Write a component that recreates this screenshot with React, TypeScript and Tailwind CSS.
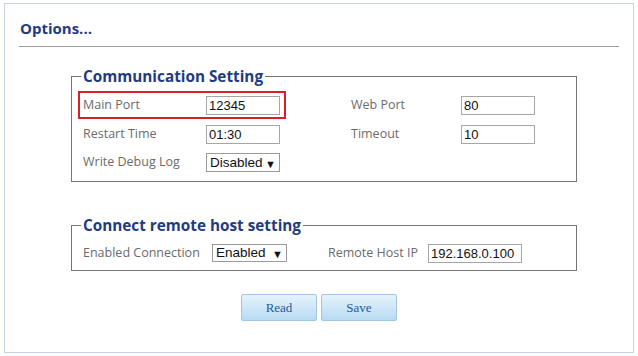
import { useState } from "react";

const labelCls = "text-[12.5px] text-[#6b6b6b] [font-family:'Open_Sans',sans-serif]";
const inputCls =
  "block h-[19px] border border-[#a6a6a6] bg-white px-[2px] py-0 text-[13px] leading-[17px] text-[#111] [font-family:'Liberation_Sans',Arial,sans-serif] outline-none";

function Select({ value, options, className }: { value: string; options: string[]; className: string }) {
  const [v, setV] = useState(value);
  return (
    <div className={"relative " + className}>
      <select
        value={v}
        onChange={(e) => setV(e.target.value)}
        className="block h-full w-full appearance-none border border-[#9a9a9a] bg-white py-0 pl-[3px] text-[13.5px] leading-[16px] text-[#111] [font-family:'Liberation_Sans',Arial,sans-serif] outline-none"
      >
        {options.map((o) => (
          <option key={o}>{o}</option>
        ))}
      </select>
      <span className="pointer-events-none absolute right-[4px] top-1/2 -translate-y-1/2 text-[11px] leading-[11px] text-[#111]">▼</span>
    </div>
  );
}

function Legend({ children }: { children: string }) {
  return (
    <legend className="ml-[9px] px-[2px] text-[15.3px] leading-[20px] font-bold text-[#1f3b82] [font-family:'Open_Sans',sans-serif]">
      {children}
    </legend>
  );
}

export default function App() {
  return (
    <div className="h-[356px] w-[638px] bg-white pl-[4px] pt-[3px]">
      <div className="h-[350px] w-[630px] border border-[#c3d5e6] bg-white">
        <h1 className="pl-[15px] pt-[14px] text-[15px] leading-[20px] font-bold text-[#1f3b82] [font-family:'Open_Sans',sans-serif]">
          Options...
        </h1>
        <div className="mx-[14px] mt-[8px] h-px bg-[#9d9d9d]" />

        <fieldset className="ml-[66px] mt-[19px] w-[506px] border border-[#747474] pb-[4px] pt-[5px]">
          <Legend>Communication Setting</Legend>
          <div className="flex h-[28px] items-center">
            <div className="ml-[6px] flex h-[28px] items-center border-2 border-[#d9202a] pl-[3px] pr-[4px]">
              <span className={labelCls + " w-[123px]"}>Main Port</span>
              <input className={inputCls + " w-[74px]"} defaultValue="12345" />
            </div>
            <span className={labelCls + " ml-[65px] w-[110px]"}>Web Port</span>
            <input className={inputCls + " w-[74px]"} defaultValue="80" />
          </div>
          <div className="flex h-[29px] items-center pl-[11px] pt-[1px]">
            <span className={labelCls + " w-[123px]"}>Restart Time</span>
            <input className={inputCls + " w-[74px]"} defaultValue="01:30" />
            <span className={labelCls + " ml-[71px] w-[110px]"}>Timeout</span>
            <input className={inputCls + " w-[74px]"} defaultValue="10" />
          </div>
          <div className="flex h-[29px] items-center pl-[11px]">
            <span className={labelCls + " w-[123px]"}>Write Debug Log</span>
            <Select value="Disabled" options={["Disabled", "Enabled"]} className="h-[19px] w-[74px]" />
          </div>
        </fieldset>

        <fieldset className="ml-[66px] mt-[33px] w-[506px] border border-[#747474] pb-[4px] pt-[5px]">
          <Legend>Connect remote host setting</Legend>
          <div className="flex h-[26px] items-center pl-[11px]">
            <span className={labelCls + " w-[129px]"}>Enabled Connection</span>
            <Select value="Enabled" options={["Enabled", "Disabled"]} className="h-[18px] w-[75px]" />
            <span className={labelCls + " ml-[41px] w-[100px]"}>Remote Host IP</span>
            <input className={inputCls + " h-[18px] w-[94px]"} defaultValue="192.168.0.100" />
          </div>
        </fieldset>

        <div className="mt-[23px] flex justify-center gap-[4px]">
          {["Read", "Save"].map((b) => (
            <button
              key={b}
              className="h-[27px] w-[76px] rounded-[2px] border border-[#9ec6e4] bg-gradient-to-b from-[#e6f3fd] to-[#b8dbf3] text-[13px] text-[#1d5b9b] [font-family:'Liberation_Serif',serif]"
            >
              {b}
            </button>
          ))}
        </div>
      </div>
    </div>
  );
}
